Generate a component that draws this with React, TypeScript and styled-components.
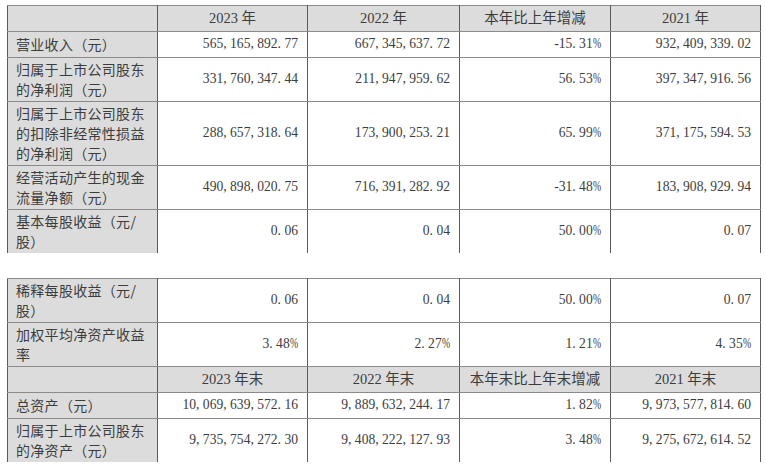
import styled, { createGlobalStyle } from 'styled-components';

const GlobalStyle = createGlobalStyle`
  body {
    margin: 0;
    background: #ffffff;
  }
`;

const Page = styled.div`
  display: flex;
  flex-direction: column;
  gap: 25px;
  padding: 5px 0 0 7px;
`;

const Table = styled.table<{ $open?: boolean }>`
  border-collapse: collapse;
  table-layout: fixed;
  width: 753px;
  color: #3c3c3c;

  col:nth-child(1),
  col:nth-child(2),
  col:nth-child(5) {
    width: 150px;
  }
  col:nth-child(3) {
    width: 152px;
  }
  col:nth-child(4) {
    width: 151px;
  }

  tr:last-child td {
    border-bottom: ${(p) => (p.$open ? 'none' : '1px solid #8a8a8a')};
  }
`;

const Cell = styled.td`
  border-top: 1px solid #8a8a8a;
  border-bottom: 1px solid #8a8a8a;
  border-left: 1px solid #5a5a5a;
  border-right: 1px solid #5a5a5a;
  padding: 3px 8px 4px;
  line-height: 18px;
  font-size: 14px;
  vertical-align: middle;
`;

const HeadCell = styled(Cell)`
  background: #dcdcdc;
  text-align: center;
  font-family: 'Liberation Serif', 'Noto Sans CJK SC', serif;
  font-size: 14.5px;
`;

const LabelCell = styled(Cell)`
  background: #dcdcdc;
  font-family: 'Noto Sans CJK SC', sans-serif;
  letter-spacing: 0.3px;
  line-height: 20px;
  padding: 1px 8px 2px;
`;

const LabelLine = styled.div`
  white-space: nowrap;
`;

const ValueCell = styled(Cell)`
  background: #ffffff;
  text-align: right;
  font-family: 'Liberation Serif', serif;
  font-size: 13.6px;
  padding-right: 9px;
`;

const Punct = styled.span`
  margin-right: 3.4px;
`;

const Percent = styled.span`
  display: inline-block;
  transform: scaleX(0.72);
  transform-origin: left center;
  margin-right: -3px;
`;

function Num({ value }: { value: string }) {
  return (
    <>
      {value.split('').map((ch, i) =>
        ch === ',' || ch === '.' ? (
          <Punct key={i}>{ch}</Punct>
        ) : ch === '%' ? (
          <Percent key={i}>{ch}</Percent>
        ) : (
          ch
        )
      )}
    </>
  );
}

type Row = { label: string[]; values: string[] };

const firstRows: Row[] = [
  { label: ['营业收入（元）'], values: ['565,165,892.77', '667,345,637.72', '-15.31%', '932,409,339.02'] },
  { label: ['归属于上市公司股东', '的净利润（元）'], values: ['331,760,347.44', '211,947,959.62', '56.53%', '397,347,916.56'] },
  {
    label: ['归属于上市公司股东', '的扣除非经常性损益', '的净利润（元）'],
    values: ['288,657,318.64', '173,900,253.21', '65.99%', '371,175,594.53'],
  },
  { label: ['经营活动产生的现金', '流量净额（元）'], values: ['490,898,020.75', '716,391,282.92', '-31.48%', '183,908,929.94'] },
  { label: ['基本每股收益（元/', '股）'], values: ['0.06', '0.04', '50.00%', '0.07'] },
];

const secondRows: Row[] = [
  { label: ['稀释每股收益（元/', '股）'], values: ['0.06', '0.04', '50.00%', '0.07'] },
  { label: ['加权平均净资产收益', '率'], values: ['3.48%', '2.27%', '1.21%', '4.35%'] },
];

const assetRows: Row[] = [
  { label: ['总资产（元）'], values: ['10,069,639,572.16', '9,889,632,244.17', '1.82%', '9,973,577,814.60'] },
  { label: ['归属于上市公司股东', '的净资产（元）'], values: ['9,735,754,272.30', '9,408,222,127.93', '3.48%', '9,275,672,614.52'] },
];

function Cols() {
  return (
    <colgroup>
      <col />
      <col />
      <col />
      <col />
      <col />
    </colgroup>
  );
}

function DataRow({ row }: { row: Row }) {
  return (
    <tr>
      <LabelCell>
        {row.label.map((line, i) => (
          <LabelLine key={i}>{line}</LabelLine>
        ))}
      </LabelCell>
      {row.values.map((v, i) => (
        <ValueCell key={i}>
          <Num value={v} />
        </ValueCell>
      ))}
    </tr>
  );
}

function HeadRow({ titles }: { titles: string[] }) {
  return (
    <tr>
      <HeadCell />
      {titles.map((t) => (
        <HeadCell key={t}>{t}</HeadCell>
      ))}
    </tr>
  );
}

export default function App() {
  return (
    <>
      <GlobalStyle />
      <Page>
        <Table $open>
          <Cols />
          <tbody>
            <HeadRow titles={['2023 年', '2022 年', '本年比上年增减', '2021 年']} />
            {firstRows.map((r) => (
              <DataRow key={r.label.join('')} row={r} />
            ))}
          </tbody>
        </Table>
        <Table $open>
          <Cols />
          <tbody>
            {secondRows.map((r) => (
              <DataRow key={r.label.join('')} row={r} />
            ))}
            <HeadRow titles={['2023 年末', '2022 年末', '本年末比上年末增减', '2021 年末']} />
            {assetRows.map((r) => (
              <DataRow key={r.label.join('')} row={r} />
            ))}
          </tbody>
        </Table>
      </Page>
    </>
  );
}
